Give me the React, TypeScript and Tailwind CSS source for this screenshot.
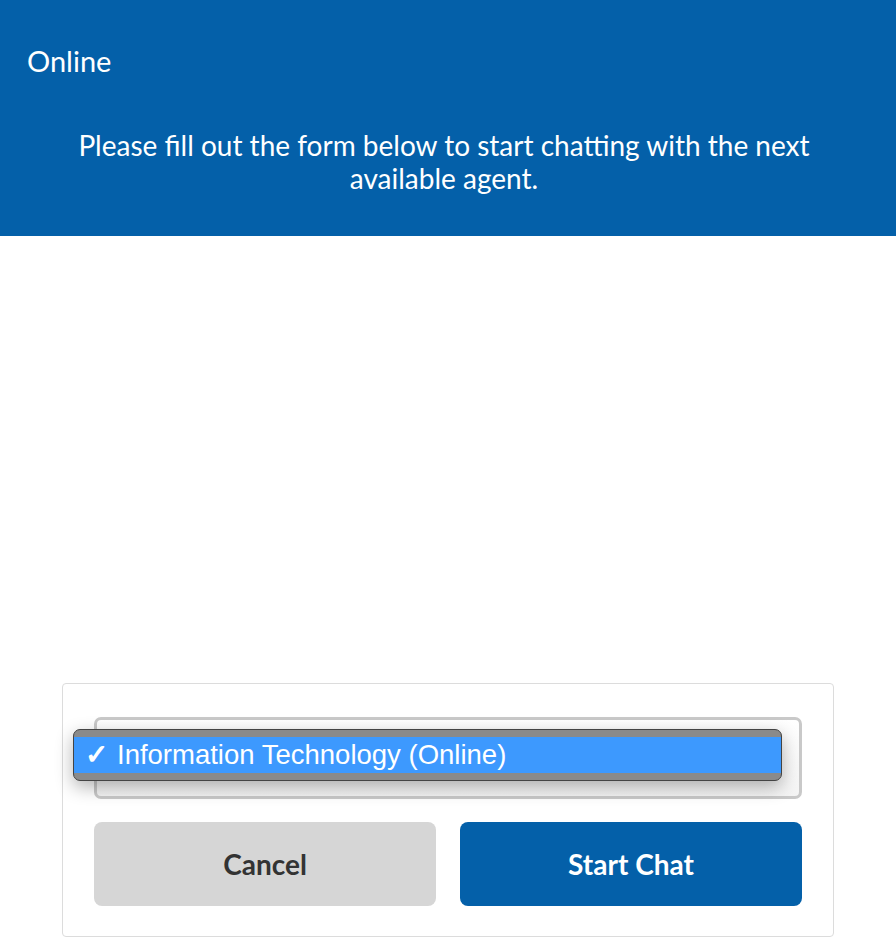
export default function App() {
  return (
    <div className="flex min-h-[944px] w-full flex-col bg-white font-['Lato',sans-serif]">
      <header className="flex h-[236px] flex-col bg-[#0460a9] px-[27px] text-white">
        <h1 className="mt-[43px] text-[29px] leading-[36px]">Online</h1>
        <p className="mx-auto mt-[50px] max-w-[768px] pr-[8px] text-center text-[28px] leading-[33px]">
          Please fill out the form below to start chatting with the next available agent.
        </p>
      </header>

      <div className="flex flex-1 flex-col justify-end px-[62px] pb-[7px]">
        <form className="flex flex-col gap-[23px] rounded-[4px] border border-[#dcdcdc] px-[31px] pb-[30px] pt-[33px]">
          <div className="relative h-[82px] rounded-[7px] border-[3px] border-[#c9c9c9] bg-gradient-to-b from-white to-[#f4f4f4]">
            <div className="absolute left-[-24px] right-[17px] top-[9px] overflow-hidden rounded-[7px] border border-[#444] bg-[#8a8a8a] py-[7px] shadow-[0_6px_18px_rgba(0,0,0,0.3)]">
              <div className="flex h-[36px] items-center gap-[9px] bg-[#3d99fe] pl-[11px] font-['Liberation_Sans',sans-serif] text-[27.5px] text-white">
                <span className="text-[28px] font-bold">✓</span>
                <span>Information Technology (Online)</span>
              </div>
            </div>
          </div>
          <div className="grid grid-cols-2 gap-[24px]">
            <button type="button" className="h-[84px] rounded-[8px] bg-[#d6d6d6] text-[28px] font-bold text-[#333]">
              Cancel
            </button>
            <button type="button" className="h-[84px] rounded-[8px] bg-[#0460a9] text-[28px] font-bold text-white">
              Start Chat
            </button>
          </div>
        </form>
      </div>
    </div>
  );
}
